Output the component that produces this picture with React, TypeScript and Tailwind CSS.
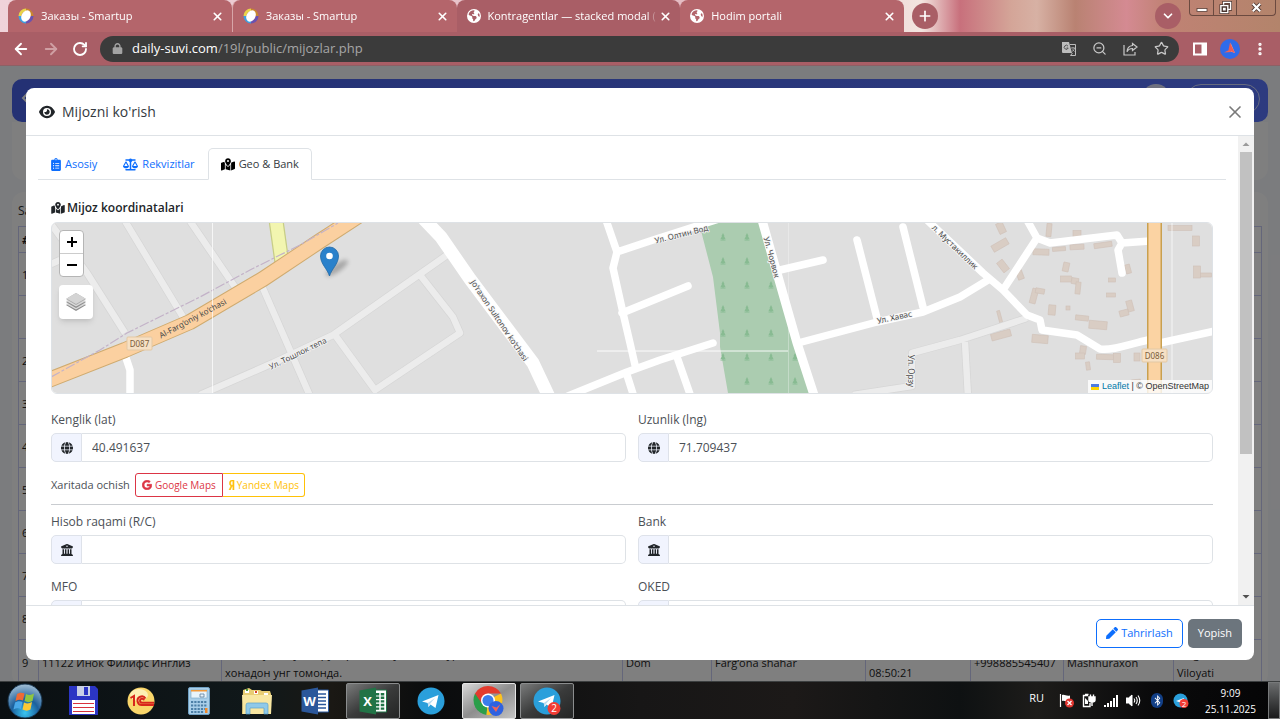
import React from 'react';
import {
    FaEye, FaScaleBalanced, FaMapLocationDot, FaGlobe,
    FaBuildingColumns, FaGoogle, FaYandex, FaEarthAmericas, FaBluetoothB, FaLock,
} from 'react-icons/fa6';
import { FaClipboardList, FaPen } from 'react-icons/fa';
import { ArrowLeft, ArrowRight, RotateCw, X, Plus, ChevronDown, Star, ZoomOut, EllipsisVertical } from 'lucide-react';
import { clsx } from 'clsx';

const BROWSER_TABS = [
    { title: 'Заказы - Smartup', icon: 'smartup' },
    { title: 'Заказы - Smartup', icon: 'smartup' },
    { title: 'Kontragentlar — stacked modal (', icon: 'globe', active: true },
    { title: 'Hodim portali', icon: 'globe' },
];

const LAST_ROW = [
    '9',
    '11122 Инок Филифс Инглиз',
    'Катта кўча, дўкон рўпарасидан ўтганда, бурилишдан кейин\nхонадон унг томонда.',
    'Dom',
    'Farg‘ona shahar',
    '25.11.2025\n08:50:21',
    '+998885545407',
    'Mashhuraxon',
    'Farg‘ona\nViloyati',
];

const BUILDINGS: number[][] = [
    [1001, 228, 7, 11, -25], [1000, 245, 17, 7, -30], [1003, 266, 7, 12, -38], [1020, 275, 6, 9, -20],
    [1049, 230, 5, 13, 5], [1041, 252, 16, 6, 2], [1059, 249, 13, 4, -4], [1077, 247, 14, 5, -3],
    [1077, 234, 8, 7, 0], [1103, 245, 18, 5, -8], [1128, 269, 5, 9, -15], [1066, 267, 6, 9, 12],
    [1066, 279, 11, 6, 0], [1075, 281, 7, 6, 10], [1078, 288, 5, 12, 6], [1034, 296, 6, 15, 15],
    [1040, 291, 9, 5, 10], [1052, 310, 7, 10, 5], [1068, 308, 4, 4, 0], [1082, 318, 13, 5, 6],
    [1098, 325, 18, 8, 5], [1112, 280, 7, 4, 0], [1111, 295, 9, 4, 0], [1130, 306, 6, 11, -15],
    [1124, 313, 9, 6, -15], [1001, 335, 20, 7, -15], [1000, 318, 3, 15, -15], [1040, 339, 16, 8, 5],
    [1083, 350, 6, 8, 8], [1080, 356, 9, 6, 0], [1105, 357, 17, 5, 2], [1117, 358, 7, 9, 0],
    [1137, 357, 6, 8, 0], [1088, 366, 4, 8, -8], [1180, 228, 24, 5, 0], [1196, 241, 7, 10, 0],
    [1197, 272, 7, 12, 0], [1206, 275, 11, 4, 0], [1136, 381, 9, 3, -5],
];

const TREE_ROWS = [236, 260, 284, 308, 332, 356, 380];

const SmartupIcon = () => (
    <svg viewBox="0 0 16 16" className="size-4 shrink-0">
        <g fill="none" strokeWidth="3">
            <path d="M8 2A6 6 0 0 1 14 8" stroke="#c9862f" />
            <path d="M14 8A6 6 0 0 1 8 14" stroke="#6a51b0" />
            <path d="M8 14A6 6 0 0 1 2 8" stroke="#3f9fe0" />
            <path d="M2 8A6 6 0 0 1 8 2" stroke="#e8d34a" />
        </g>
        <ellipse cx="8" cy="8" rx="4.400" ry="6" transform="rotate(30 8 8)" fill="#fff" />
    </svg>
);

const TabStrip = () => (
    <div className="flex h-8 shrink-0 bg-[linear-gradient(90deg,#f0d3da_0%,#e3b9c0_60%,#f3e5e0_72%,#c8707c_75%,#d4a598_79%,#d7b1a4_81%,#b98272_84%,#d48a92_88%,#c08274_91%,#b3846b_100%)] pl-2">
        <div className="flex w-[896px] shrink-0">
            {BROWSER_TABS.map((tab, i) => (
                <div
                    key={i}
                    className={clsx(
                        'flex flex-1 min-w-0 items-center rounded-t-lg pl-[10px] pr-2',
                        tab.active ? 'bg-[#a95e66]' : 'bg-[#b4656b]',
                        i === 1 && 'border-l border-[#d7a5a8]'
                    )}
                >
                    {tab.icon === 'smartup' ? <SmartupIcon /> : <FaEarthAmericas className="size-[14px] shrink-0 text-white" />}
                    <span className="ml-[7px] flex-1 overflow-hidden whitespace-nowrap text-[11px] text-white mask-[linear-gradient(90deg,#000_94%,transparent)]">
                        {tab.title}
                    </span>
                    <button aria-label="Закрыть" className="ml-[2px] text-white">
                        <X className="size-[13px]" strokeWidth={3} />
                    </button>
                </div>
            ))}
        </div>
        <div className="flex flex-1 items-center pl-2">
            <button aria-label="Новая вкладка" className="grid size-[26px] place-items-center rounded-full bg-[#a95e66] text-white">
                <Plus className="size-4" strokeWidth={2.500} />
            </button>
            <button aria-label="Поиск вкладок" className="ml-auto grid size-[26px] place-items-center rounded-full bg-[#a95e66] text-white">
                <ChevronDown className="size-[14px]" strokeWidth={3} />
            </button>
            <div className="ml-2 mr-1 flex h-4 self-start divide-x divide-[#6b4a40] rounded-b border border-t-0 border-[#6b4a40] text-white">
                <button aria-label="Свернуть" className="grid w-6 place-items-center">
                    <svg viewBox="0 0 12 10" className="h-[10px] w-3"><rect x="1" y="5.5" width="10" height="3" fill="#fff" stroke="#5a4038" strokeWidth=".8" /></svg>
                </button>
                <button aria-label="Развернуть" className="grid w-[23px] place-items-center">
                    <svg viewBox="0 0 14 14" className="size-[13px]" fill="none">
                        <path d="M5 4V1.5h7.500v7.500H10M2 5h7.500v7.500H2zM5 8h1.500v1.500H5z" stroke="#4a3530" strokeWidth="3" />
                        <path d="M5 4V1.500h7.500v7.500H10M2 5h7.500v7.500H2zM5 8h1.500v1.500H5z" stroke="#fff" strokeWidth="1.500" />
                    </svg>
                </button>
                <button aria-label="Закрыть окно" className="grid w-[38px] place-items-center">
                    <svg viewBox="0 0 14 12" className="h-[11px] w-[13px]">
                        <path d="M3 2l8 8M11 2l-8 8" stroke="#4a3530" strokeWidth="4" />
                        <path d="M3 2l8 8M11 2l-8 8" stroke="#fff" strokeWidth="2.400" />
                    </svg>
                </button>
            </div>
        </div>
    </div>
);

const Toolbar = () => (
    <div className="flex h-[34px] shrink-0 items-center border-b border-[#8d6065] bg-[#a95e66] pl-3 pr-3 text-white">
        <button aria-label="Назад"><ArrowLeft className="size-[18px]" strokeWidth={2.500} /></button>
        <button aria-label="Вперёд" className="ml-3 text-[#cf9fa3]"><ArrowRight className="size-[18px]" strokeWidth={2.500} /></button>
        <button aria-label="Обновить" className="ml-3"><RotateCw className="size-4" strokeWidth={2.800} /></button>
        <div className="ml-3 flex h-[26px] flex-1 items-center rounded-full bg-[#3b3b3b] pl-3 pr-[10px] text-[#c8c8c8]">
            <FaLock className="size-[11px] text-[#a3a3a3]" />
            <span className="ml-[9px] flex-1 text-[13px] text-[#a6a6a6]">
                <span className="text-white">daily-suvi.com</span>/19l/public/mijozlar.php
            </span>
            <div className="flex items-center gap-4">
                <svg viewBox="0 0 14 14" className="size-[14px]">
                    <path d="M0 0h7l3 11H1a1 1 0 0 1-1-1z" fill="#bdbdbd" />
                    <path d="M8 2.500h5.500v11H8.500L10.500 11" fill="none" stroke="#bdbdbd" />
                    <path d="M6 4.200A2 2 0 1 0 6.200 6H4.500" fill="none" stroke="#4a4a4a" strokeWidth=".9" />
                    <path d="M9 6h4M11 5v1M12.500 6c-.5 2-1.500 3-2.500 3.500M10.500 7.500l2 2" fill="none" stroke="#bdbdbd" strokeWidth=".8" />
                </svg>
                <ZoomOut className="size-[15px]" />
                <svg viewBox="0 0 15 14" className="h-[14px] w-[15px]" fill="none" stroke="currentColor" strokeWidth="1.200">
                    <path d="M1 3v10h11v-3" />
                    <path d="M9.500 1.500L14 5 9.500 8.500V6.500C7 6.500 5 7.500 4 9.800 4.200 6 6 4 9.500 3.500z" />
                </svg>
                <Star className="size-[15px]" />
            </div>
        </div>
        <svg viewBox="0 0 14 14" className="ml-[14px] size-[14px]">
            <path d="M0 .5h14v13H0zM2 2.500v9h6.500v-9z" fill="#fff" fillRule="evenodd" />
        </svg>
        <svg viewBox="0 0 20 20" className="ml-[13px] size-5">
            <circle cx="10" cy="10" r="10" fill="#2f6bea" />
            <path d="M10.500 3.500l4.500 10.500-4.500-1.500z" fill="#f7a08c" />
            <path d="M4 13.500l6-3 1 2.500z" fill="#f0645a" />
            <path d="M10 3.500l-1.500 7.500 6.500 3-3-6z" fill="#ee5a55" />
        </svg>
        <button aria-label="Меню" className="ml-3"><EllipsisVertical className="size-4" strokeWidth={3} /></button>
    </div>
);

/* Page that stays under the modal */
const ClientsPage = () => (
    <div className="h-full overflow-hidden bg-[#f7f8fc] px-3 pt-[13px]">
        <div className="flex h-[43px] items-start justify-between rounded-[10px] bg-[linear-gradient(90deg,#4862e8,#5a76ff)] px-2">
            <svg viewBox="0 0 10 14" className="mt-3 h-[14px] w-[10px]"><path d="M8 2L3 7l5 5" stroke="#fff" strokeWidth="2" fill="none" /></svg>
            <div className="flex gap-4 pt-[5px]">
                <div className="size-7 rounded-full bg-white/80" />
                <div className="h-[30px] w-[74px] rounded-full border border-white/70" />
            </div>
        </div>
        <div className="h-[58px] rounded-b-xl bg-white" />
        <div className="mt-3 rounded-xl bg-white px-[6px] pt-2">
            <div className="h-[26px] text-[12px] leading-[22px] text-[#333]">Sahifada</div>
            <table className="w-full table-fixed border-collapse text-[11px] leading-[19px] text-[#222]">
                <colgroup>
                    <col className="w-[20px]" />
                    <col className="w-[183px]" />
                    <col className="w-[401px]" />
                    <col className="w-[89px]" />
                    <col className="w-[154px]" />
                    <col className="w-[105px]" />
                    <col className="w-[93px]" />
                    <col className="w-[110px]" />
                    <col />
                </colgroup>
                <thead>
                    <tr className="h-[26px]">
                        {LAST_ROW.map((_, c) => (
                            <th key={c} className="border border-[#c9cdf5] pl-[3px] text-left font-bold italic">{c === 0 ? '#' : ''}</th>
                        ))}
                    </tr>
                </thead>
                <tbody>
                    {['1', '', '2', '3', '4', '5', '6', '7', '8'].map((n, i) => (
                        <tr key={i} className="h-[43px]">
                            {LAST_ROW.map((_, c) => (
                                <td key={c} className="border border-[#c9cdf5] pl-[3px]">{c === 0 ? n : ''}</td>
                            ))}
                        </tr>
                    ))}
                    <tr className="h-[46px]">
                        {LAST_ROW.map((cell, c) => (
                            <td key={c} className="whitespace-pre-line border border-[#c9cdf5] pl-[3px]">{cell}</td>
                        ))}
                    </tr>
                </tbody>
            </table>
        </div>
    </div>
);

const MapCanvas = () => (
    <svg viewBox="51 223 1162 170" preserveAspectRatio="xMidYMid slice" className="block h-full w-full bg-[#dfdfdf]">
        <g fill="#d9cdc4" stroke="#cfc0b7" strokeWidth=".6">
            {BUILDINGS.map(([x, y, w, h, r], i) => (
                <rect key={i} x={x - w / 2} y={y - h / 2} width={w} height={h} transform={`rotate(${r} ${x} ${y})`} />
            ))}
        </g>
        <path d="M699 223l14 54 7 56v14l8 46h82l-15-50-20-70-14-50z" fill="#abccb0" />
        <g fill="#88bb92">
            {TREE_ROWS.map((y, r) =>
                [723, 747, 771, 795].map((x, c) => {
                    if (c === 2 && r < 2) return null;
                    if (c === 3 && r < 5) return null;
                    if (c === 0 && r === 6) return null;
                    return <path key={`${r}-${c}`} d={`M${x} ${y - 3}l1.500 3h-.5l1.500 3h-2v.5h2v1h-5v-1h2v-.5H${x - 2.5}l1.500-3h-.5z`} />;
                })
            )}
        </g>

        <g fill="none" stroke="#d6d6d6" strokeWidth="8" strokeLinejoin="round">
            <path d="M48 220l39 53 38 60M51 264l9-4M125 221l58 96M190 221l45 66M262 286l48 110M200 395l73-32 60-28 114-80M420 275l33 42 7 16-85 57-40-55" />
            <path d="M853 395l59-9v-33l48-13 67-22M965 342l3 55" />
        </g>
        <g fill="none" stroke="#ececec" strokeWidth="6.500" strokeLinejoin="round">
            <path d="M48 220l39 53 38 60M51 264l9-4M125 221l58 96M190 221l45 66M262 286l48 110M200 395l73-32 60-28 114-80M420 275l33 42 7 16-85 57-40-55" />
            <path d="M853 395l59-9v-33l48-13 67-22M965 342l3 55" />
        </g>

        <g fill="none" stroke="#fff" strokeWidth="7.500" strokeLinecap="round" strokeLinejoin="round">
            <path d="M125 355l5 15v28M606 220l11 32-4 16 10 45 7 30 5 22M627 375l7 22M617 252l36-12 47-15 25-8M622 313l66-27M568 396l59-24 33-12 53-17M677 357l14 40" />
            <path d="M780 270l43-10M798 343l79-21 46-10 37-15 28-17M857 240l20 78M903 227l20 80" />
            <path d="M926 219l57 54 20 17 24 25 13 5 2 10 35 5 23 14c12 2 30-5 48-9M1003 290l34-52-10-18M1037 238l13 5 67-8 5 8 28-2M1122 243l-4 7 4 23M1160 343l55-12" />
        </g>
        <path d="M762 220l15 53 20 70 17 52" fill="none" stroke="#fff" strokeWidth="9" />
        <path d="M420 215l21 22 29 42 63 84 17 36" fill="none" stroke="#fff" strokeWidth="13" strokeLinejoin="round" />

        <g fill="none">
            <path d="M276 220l6 43" stroke="#c7cd86" strokeWidth="15" />
            <path d="M276 220l6 43" stroke="#f2f5b0" strokeWidth="12.500" />
            <path d="M46 381l79-31 65-28 73-43 57-38 46-30" stroke="#cfab70" strokeWidth="16" strokeLinejoin="round" />
            <path d="M46 381l79-31 65-28 73-43 57-38 46-30" stroke="#fbd0a0" strokeWidth="14" strokeLinejoin="round" />
            <path d="M51 377l49-27 27-17 73-36 50-27 50-25 38-22" stroke="#c3b2c8" strokeWidth="1.200" strokeDasharray="10 2 3 2" />
            <path d="M1154.500 220v176" stroke="#c9a04f" strokeWidth="15" />
            <path d="M1154.500 220v176" stroke="#fbd3a3" strokeWidth="12" />
        </g>
        <path d="M212.500 223v170M1172 223v170" stroke="#fff" strokeWidth="1" opacity=".7" />
        <path d="M788.500 223v170" stroke="#fff" strokeWidth="1" opacity=".3" />
        <path d="M597 351h191" stroke="#fff" strokeWidth="1" opacity=".9" />

        <g fill="#f6e0c4" stroke="#e3c8a4" strokeWidth="1">
            <rect x="127" y="337" width="25" height="13" rx="1" />
            <rect x="1142" y="349" width="25" height="13" rx="1" />
        </g>
        <g className="font-['Noto_Sans'] text-[8px]" textAnchor="middle" fill="#7b5d3a">
            <text x="139.500" y="347">D087</text>
            <text x="1154.500" y="359">D086</text>
        </g>
        <g className="font-['Noto_Sans'] text-[8px]" textAnchor="middle" fill="#4a4a4a" stroke="#f4f4f4" strokeWidth="1.500" paintOrder="stroke">
            <text transform="translate(194 321) rotate(-28)" stroke="none">Al-Farg‘oniy ko‘chasi</text>
            <text transform="translate(299 356) rotate(-26)">Ул. Тошлок тепа</text>
            <text transform="translate(497 322) rotate(56)">Jo‘raxon Sultonov ko‘chasi</text>
            <text transform="translate(682 237) rotate(-14)">Ул. Олтин Вод</text>
            <text transform="translate(769 258) rotate(75)">Ул. Чорвок</text>
            <text transform="translate(895 320) rotate(-12)">Ул. Хавас</text>
            <text transform="translate(953 249) rotate(44)">л. Мустакиллик</text>
            <text transform="translate(908 371) rotate(90)">Ул. Орзу</text>
        </g>

        <ellipse cx="337" cy="268" rx="13" ry="4" transform="rotate(-35 337 268)" fill="#000" opacity=".25" className="blur-[2px]" />
        <path d="M329.500 276c-2-7-9-12-9-20a9 9 0 0 1 18 0c0 8-7 13-9 20z" fill="#2a81cb" stroke="#2068a6" strokeWidth=".8" />
        <circle cx="329.500" cy="256" r="3.300" fill="#fff" />
    </svg>
);

const LocationMap = () => (
    <div className="relative h-[172px] overflow-hidden rounded-md border border-[#dee2e6]">
        <MapCanvas />
        <div className="absolute left-[7px] top-[7px] flex flex-col gap-2">
            <div className="w-[25px] overflow-hidden rounded-sm border border-[#b5b5b5] bg-white text-black">
                <button aria-label="Zoom in" className="grid h-[23px] w-full place-items-center border-b border-[#ccc]">
                    <svg viewBox="0 0 10 10" className="size-[10px]"><path d="M5 0v10M0 5h10" stroke="#000" strokeWidth="2" /></svg>
                </button>
                <button aria-label="Zoom out" className="grid h-[22px] w-full place-items-center">
                    <svg viewBox="0 0 10 10" className="size-[10px]"><path d="M0 5h10" stroke="#000" strokeWidth="2" /></svg>
                </button>
            </div>
            <button aria-label="Layers" className="grid size-[34px] place-items-center rounded bg-white shadow-md">
                <svg viewBox="0 0 22 20" className="h-5 w-[22px]">
                    <path d="M1 13l10 6 10-6-10-5z" fill="#8d8d8d" />
                    <path d="M1 12l10 5.500L21 12l-10-5z" fill="#d9d9d9" />
                    <path d="M1 10l10 6 10-6-10-5z" fill="#8d8d8d" />
                    <path d="M1 9l10 5.500L21 9 11 4z" fill="#d9d9d9" />
                    <path d="M1 7l10 6 10-6-10-6z" fill="#a8a8a8" />
                    <path d="M1.500 6.500L11 12l9.500-5.500L11 1z" fill="#d4d4d4" />
                </svg>
            </button>
        </div>
        <div className="absolute bottom-0 right-0 flex items-center bg-white/80 px-[3px] font-['Liberation_Sans'] text-[9px] leading-[13px] text-[#333]">
            <svg viewBox="0 0 8 6" className="mr-[3px] h-[6px] w-2"><path fill="#4c7be1" d="M0 0h8v3H0z" /><path fill="#ffd500" d="M0 3h8v3H0z" /></svg>
            <a href="#" className="text-[#0078a8]">Leaflet</a>
            <span className="whitespace-pre"> | © OpenStreetMap</span>
        </div>
    </div>
);

interface FieldProps {
    id: string;
    label: string;
    icon: React.ElementType;
    value?: string;
}

const Field = ({ id, label, icon: Icon, value = '' }: FieldProps) => (
    <div>
        <label htmlFor={id} className="mb-1 block leading-[19px] text-[#4b5056]">{label}</label>
        <div className="flex h-[29px]">
            <span className="grid w-[31px] place-items-center rounded-l-[5px] border border-[#dee2ea] bg-[#f1f4fe] text-[#212529]">
                <Icon className="size-3" />
            </span>
            <input
                id={id}
                readOnly
                defaultValue={value}
                className="min-w-0 flex-1 rounded-r-[5px] border border-l-0 border-[#dee2e6] bg-white px-[10px] text-[#4b5056] outline-none"
            />
        </div>
    </div>
);

const NAV_TABS = [
    { title: 'Asosiy', icon: FaClipboardList, iconClass: 'w-[10px]' },
    { title: 'Rekvizitlar', icon: FaScaleBalanced, iconClass: 'w-[15px]' },
    { title: 'Geo & Bank', icon: FaMapLocationDot, iconClass: 'w-[14px]', active: true },
];

const ClientModal = () => (
    <div role="dialog" aria-label="Mijozni ko'rish" className="flex min-h-0 w-full flex-col overflow-hidden rounded-lg bg-white">
        <div className="flex h-12 shrink-0 items-center border-b border-[#dee2e6] pl-[13px] pr-[9px]">
            <FaEye className="size-4 text-[#212529]" />
            <h5 className="ml-[7px] flex-1 text-[14px] text-[#343a40]">Mijozni ko'rish</h5>
            <button aria-label="Yopish" className="text-[#7a7a7a]">
                <X className="size-5" strokeWidth={2} />
            </button>
        </div>

        <div className="flex min-h-0 flex-1">
            <div className="min-w-0 flex-1 overflow-hidden px-3 pt-3">
                <div className="flex h-8 border-b border-[#dee2e6]">
                    {NAV_TABS.map((tab) => (
                        <button
                            key={tab.title}
                            className={clsx(
                                'flex h-8 items-center gap-1 rounded-t-[5px] border px-3 text-[11px]',
                                tab.active ? 'border-[#dee2e6] border-b-white bg-white text-[#343a40]' : 'border-transparent text-[#0d6efd]'
                            )}
                        >
                            <tab.icon className={clsx('h-[13px]', tab.iconClass, tab.active && 'text-black')} />
                            {tab.title}
                        </button>
                    ))}
                </div>

                <div className="px-[13px] pt-[18px]">
                    <h6 className="mb-[5px] flex items-center gap-[2px] leading-[19px] font-semibold text-[#212529]">
                        <FaMapLocationDot className="h-3 w-[14px]" />
                        Mijoz koordinatalari
                    </h6>
                    <LocationMap />
                    <div className="mt-4 grid grid-cols-2 gap-x-3">
                        <Field id="lat" label="Kenglik (lat)" icon={FaGlobe} value="40.491637" />
                        <Field id="lng" label="Uzunlik (lng)" icon={FaGlobe} value="71.709437" />
                    </div>
                    <div className="mt-[11px] flex h-6 items-center text-[11px] text-[#4b5056]">
                        <span>Xaritada ochish</span>
                        <a href="#" className="ml-[5px] flex h-6 items-center gap-[3px] rounded-l-[3px] border border-[#dc3545] px-[6px] text-[10px] text-[#dc3545]">
                            <FaGoogle className="size-[10px] stroke-current stroke-[30px]" />
                            Google Maps
                        </a>
                        <a href="#" className="flex h-6 items-center gap-[2px] rounded-r-[3px] border border-l-0 border-[#ffc107] px-[5px] text-[10px] text-[#ffc107]">
                            <FaYandex className="h-[10px] w-[7px] stroke-current stroke-[30px]" />
                            Yandex Maps
                        </a>
                    </div>
                    <hr className="my-[7px] border-[#c9ccd0]" />
                    <div className="grid grid-cols-2 gap-x-3 gap-y-[13px]">
                        <Field id="account" label="Hisob raqami (R/C)" icon={FaBuildingColumns} />
                        <Field id="bank" label="Bank" icon={FaBuildingColumns} />
                        <Field id="mfo" label="MFO" icon={FaGlobe} />
                        <Field id="oked" label="OKED" icon={FaGlobe} />
                    </div>
                </div>
            </div>
            <div className="flex w-4 shrink-0 flex-col items-center bg-[#f1f1f1]">
                <svg viewBox="0 0 16 16" className="size-4"><path d="M4.500 10L8 6.500l3.500 3.500z" fill="#9a9a9a" /></svg>
                <div className="w-3 flex-[302] bg-[#c1c1c1]" />
                <div className="flex-[135]" />
                <svg viewBox="0 0 16 16" className="size-4"><path d="M4.500 6L8 9.500 11.500 6z" fill="#505050" /></svg>
            </div>
        </div>

        <div className="flex h-[55px] shrink-0 items-center justify-end gap-[5px] border-t border-[#dee2e6] px-3 text-[11px]">
            <button className="flex h-[29px] items-center gap-[3px] rounded-[5px] border border-[#0d6efd] px-[9px] text-[#0d6efd]">
                <FaPen className="size-3" />
                Tahrirlash
            </button>
            <button className="h-[29px] rounded-[5px] bg-[#6c757d] px-[10px] text-white">Yopish</button>
        </div>
    </div>
);

const TelegramLogo = ({ badge = false }: { badge?: boolean }) => (
    <svg viewBox="0 0 28 28" className="size-7">
        <circle cx="14" cy="14" r="13.500" fill="#2a9fdb" />
        <path d="M5 14.500L21.500 8 18.500 21l-5-3.500-2 2.500-.8-4z" fill="#fff" />
        <path d="M10.800 16L18 11l-5.500 6.500-1 2.500z" fill="#bcdcf0" />
        {badge && (
            <>
                <circle cx="21" cy="21.500" r="6.500" fill="#f23c34" />
                <text x="21" y="25" textAnchor="middle" fill="#fff" className="text-[10px]">2</text>
            </>
        )}
    </svg>
);

const StartOrb = () => (
    <svg viewBox="0 0 36 36" className="size-9">
        <defs>
            <radialGradient id="orb" cx=".5" cy=".85" r=".9">
                <stop offset="0" stopColor="#39c6f2" />
                <stop offset=".45" stopColor="#1c5f9c" />
                <stop offset="1" stopColor="#b4cbdc" />
            </radialGradient>
        </defs>
        <circle cx="18" cy="18" r="17" fill="url(#orb)" stroke="#16344e" />
        <path d="M10 11c3-2 5-1.500 7.500-.5l-1.500 7c-2.500-1-5-1-7.500.5z" fill="#ef6a34" />
        <path d="M19 11c3 1.500 5.500 1 8-.5l-1.500 7.500c-2.500 1.500-5 1.500-8 0z" fill="#8fc641" />
        <path d="M8 19.500c3-1.500 5-1.500 7.500-.5l-1.500 7c-2.500-1-5-1-7.500.5z" fill="#4aa8e8" />
        <path d="M17 19.500c3 1.500 5.500 1 8-.5l-1.500 7.500c-2.500 1.500-5 1.500-8 0z" fill="#fbc933" />
    </svg>
);

const FloppyIcon = () => (
    <svg viewBox="0 0 30 31" className="h-[31px] w-[30px]">
        <path d="M1 1h26l3 3v26H1z" fill="#2b35c4" />
        <path d="M9 1h13v10H9z" fill="#c9d0e6" />
        <path d="M16 2h4v8h-4z" fill="#2b35c4" />
        <path d="M4 15h23v14H4z" fill="#fff" />
        <path d="M5 18.500h21M5 22.500h21M5 26.500h21" stroke="#d8323c" strokeWidth="1.200" />
    </svg>
);

const OneCIcon = () => (
    <svg viewBox="0 0 28 28" className="size-7">
        <circle cx="14" cy="14" r="13.500" fill="#f9d66a" />
        <ellipse cx="12" cy="8" rx="9" ry="6" fill="#fdeeb4" />
        <path d="M3.500 11L7 9v10M18.500 11.500a4.300 4.300 0 1 0-3.500 6.500H27M17 13.200a2 2 0 1 0-2 2.600h12" fill="none" stroke="#d8261c" strokeWidth="2" />
    </svg>
);

const CalculatorIcon = () => (
    <svg viewBox="0 0 22 28" className="h-7 w-[22px]">
        <rect x=".5" y=".5" width="21" height="27" rx="1.500" fill="#a9cfe9" stroke="#6f9fc2" />
        <rect x="3" y="3" width="16" height="8" fill="#e9f4fb" stroke="#7aa6c4" strokeWidth=".6" />
        <path d="M3 3h16v1.500H3z" fill="#f09a3c" />
        <path d="M12 7h4v3h-4z" fill="none" stroke="#5a7f9d" strokeWidth=".8" />
        <path d="M3 15h16M3 18.500h16M3 22h16M3 25h13" stroke="#4c7fa6" strokeWidth="2" strokeDasharray="2.200 1.100" />
        <path d="M17 21h2.500v5H17z" fill="#f08a2c" />
    </svg>
);

const ExplorerIcon = () => (
    <svg viewBox="0 0 32 28" className="h-7 w-8">
        <path d="M2 3l6-2 3 2h8l2 1h8l1 3v20H1z" fill="#e8cd74" />
        <path d="M4 3h4v3H4zM13 4h4v3h-4zM23 6h4v2h-4z" fill="#fff" />
        <path d="M5 2h2v2H5z" fill="#4a9c3c" />
        <path d="M14 4h2v2h-2z" fill="#d8432c" />
        <path d="M1 8h30l-1 19H2z" fill="#f8e7a2" />
        <path d="M5 27V18q0-2 2-2h18q2 0 2 2v9h-4v-6H9v6z" fill="#8fc9e8" stroke="#5aa2cc" strokeWidth=".7" />
    </svg>
);

const OfficeIcon = ({ letter }: { letter: string }) => (
    <svg viewBox="0 0 28 28" className="size-7">
        <path d="M15 3h12.500v22H15z" fill="#fff" stroke={letter === 'W' ? '#2b579a' : '#217346'} />
        {letter === 'W'
            ? <path d="M17 7h8M17 10.500h8M17 14h8M17 17.500h8M17 21h8" stroke="#2b579a" strokeWidth="1.300" />
            : <path d="M18.500 6v17M23.500 6v17" stroke="#217346" strokeWidth="3.500" strokeDasharray="2.400 1.200" />}
        <path d="M.5 3.500L17 .5v27L.5 24.500z" fill={letter === 'W' ? '#2b579a' : '#217346'} />
        <text x="8.500" y="19" textAnchor="middle" fill="#fff" className="text-[13px] font-bold">{letter}</text>
    </svg>
);

const ChromeLogo = () => (
    <svg viewBox="0 0 32 32" className="size-8">
        <path d="M15 15L2 8.500a15 15 0 0 0 11.500 21.400z" fill="#2b9e4a" />
        <path d="M15 15L28 8.500a15 15 0 0 1-14.500 21.400z" fill="#fcc31e" />
        <path d="M15 8.500h13a15 15 0 0 0-26 0L8.500 18z" fill="#e33b2e" />
        <circle cx="15" cy="15.500" r="7" fill="#fff" />
        <circle cx="15" cy="15.500" r="5.500" fill="#3b7ded" />
        <circle cx="23" cy="23.500" r="7.500" fill="#2f62e0" />
        <path d="M18.500 21l4.500 6 4.500-8-4 3.500z" fill="#f0645a" />
    </svg>
);

const TASKS = [
    { name: 'Total Commander', icon: <FloppyIcon /> },
    { name: '1C', icon: <OneCIcon /> },
    { name: 'Calculator', icon: <CalculatorIcon /> },
    { name: 'Explorer', icon: <ExplorerIcon /> },
    { name: 'Word', icon: <OfficeIcon letter="W" /> },
    { name: 'Excel', icon: <OfficeIcon letter="X" />, state: 'open' },
    { name: 'Telegram', icon: <TelegramLogo /> },
    { name: 'Chrome', icon: <ChromeLogo />, state: 'active' },
    { name: 'Telegram chats', icon: <TelegramLogo badge />, state: 'open' },
];

const Taskbar = () => (
    <div className="flex h-[38px] shrink-0 items-center border-t border-[#3c3f40] bg-[linear-gradient(90deg,#0a0f12,#10181a_20%,#1a1814_26%,#0a0c0d_34%,#171616_50%,#1c1918_62%,#0e1112_75%,#1d1c1a_81%,#0a0a0b_90%,#050506)] text-white">
        <button aria-label="Start" className="grid w-[50px] place-items-center"><StartOrb /></button>
        <div className="ml-[6px] flex gap-1">
            {TASKS.map((task) => (
                <button
                    key={task.name}
                    aria-label={task.name}
                    className={clsx(
                        'grid h-9 w-[54px] place-items-center rounded-[2px] border',
                        !task.state && 'border-transparent',
                        task.state === 'open' && 'border-[#8b8d8e] bg-linear-to-br from-[#7a7b7b] via-[#3a3b3b] to-[#242525]',
                        task.state === 'active' && 'border-[#e5e5e5] bg-linear-to-br from-[#d9d9d9] via-[#8e8e8e] to-[#c4c4c4]'
                    )}
                >
                    {task.icon}
                </button>
            ))}
        </div>
        <div className="ml-auto flex items-center gap-2">
            <span className="mb-1 mr-[7px] text-[11px]">RU</span>
            <svg viewBox="0 0 15 15" className="size-[15px]">
                <path d="M1.500 1v13" stroke="#fff" strokeWidth="1.200" />
                <path d="M3 2c3-1 4 1.500 8 .5v6c-4 1-5-1.500-8-.5z" fill="#fff" />
                <circle cx="10.500" cy="10" r="4.500" fill="#e0352f" />
                <path d="M8.500 8l4 4M12.500 8l-4 4" stroke="#fff" strokeWidth="1.300" />
            </svg>
            <svg viewBox="0 0 14 15" className="h-[15px] w-[14px]" fill="none" stroke="#fff" strokeWidth="1.400">
                <path d="M6 2.500H1.500v11H8V10M3 1.500h3.500" />
                <path d="M3 5v6h3V8z" fill="#fff" stroke="none" />
                <path d="M7 4h6v3q0 2-3 2T7 7zM8.500 4V1.500M11.500 4V1.500M10 9v4" fill="#fff" />
            </svg>
            <svg viewBox="0 0 14 12" className="h-3 w-[14px]" fill="#fff">
                <path d="M0 10h2v2H0zM3 8h2v4H3zM6 6h2v6H6zM9 3h2v9H9zM12 0h2v12h-2z" />
            </svg>
            <svg viewBox="0 0 15 13" className="h-[13px] w-[15px]" fill="none" stroke="#fff">
                <path d="M0 4h2.500L6 1v11L2.500 9H0z" fill="#fff" />
                <path d="M8 4.500q1.500 2 0 4M10 3q2.500 3.500 0 7M12 1.500q3.500 5 0 10" strokeWidth="1.100" />
            </svg>
            <span className="ml-[2px] grid h-[15px] w-3 place-items-center rounded-[6px] bg-[#123f86]"><FaBluetoothB className="size-[11px]" /></span>
            <svg viewBox="0 0 16 16" className="ml-[2px] size-4">
                <circle cx="7.500" cy="7.500" r="7" fill="#2a9fdb" />
                <path d="M3 8l8-3-2 5z" fill="#fff" />
                <circle cx="11" cy="10.500" r="4.500" fill="#f23c34" />
                <text x="11" y="13.500" textAnchor="middle" fill="#fff" className="text-[8px]">2</text>
            </svg>
            <div className="ml-2 text-center text-[10px] leading-4">
                <div>9:09</div>
                <div>25.11.2025</div>
            </div>
            <div className="ml-1 h-[37px] w-3 border border-[#77797a] bg-linear-to-b from-[#6b6d6e] to-[#1a1b1c]" />
        </div>
    </div>
);

export default function App() {
    return (
        <div className="flex h-screen flex-col overflow-hidden font-['Open_Sans','Noto_Sans',sans-serif] text-[12px]">
            <TabStrip />
            <Toolbar />
            <main className="relative min-h-0 flex-1">
                <ClientsPage />
                <div className="absolute inset-0 flex bg-black/50 px-[26px] pb-[21px] pt-[22px]">
                    <ClientModal />
                </div>
            </main>
            <Taskbar />
        </div>
    );
}
